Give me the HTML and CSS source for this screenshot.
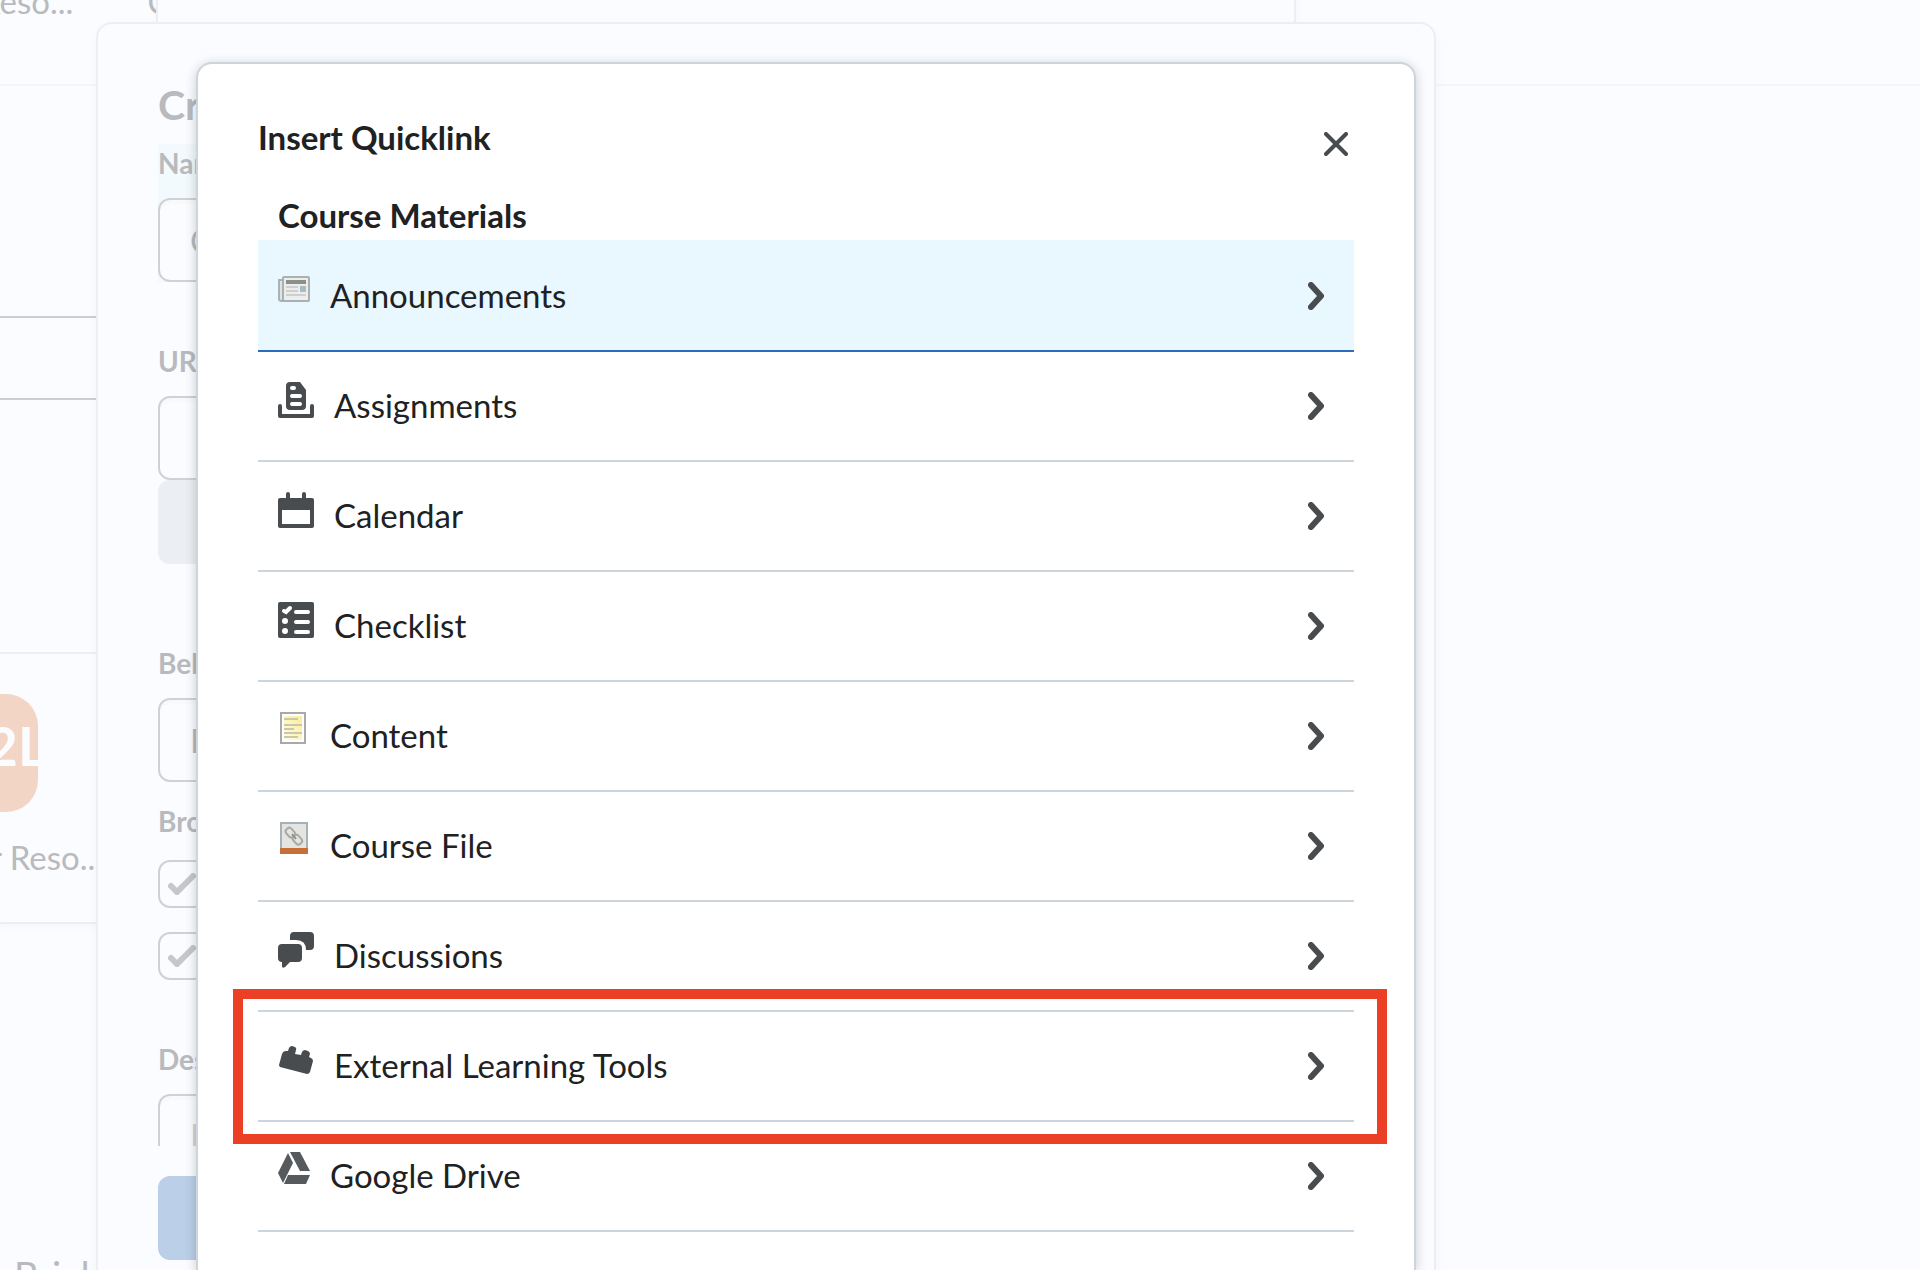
FILE: index.html
```html
<!DOCTYPE html>
<html lang="en">
<head>
<meta charset="utf-8">
<title>Insert Quicklink</title>
<meta name="viewport" content="width=device-width, initial-scale=1">
<link rel="stylesheet" href="styles.css">
</head>
<body>
<svg class="sprite" aria-hidden="true">
  <symbol id="chevron" viewBox="0 0 16 28"><path d="M3 3l10 11L3 25" fill="none" stroke="#494c4e" stroke-width="6" stroke-linecap="round" stroke-linejoin="round"/></symbol>
  <symbol id="check" viewBox="0 0 28 22"><path d="M3 13l6 6L25 3" fill="none" stroke="#c5c7ca" stroke-width="6" stroke-linecap="round"/></symbol>
</svg>

<div class="page" inert>
  <div class="topbar"><span class="tile-name cut">Reso...</span><span>C</span></div>
  <div class="block block-tall"></div>
  <div class="block block-row"></div>
  <div class="block block-space"></div>
  <div class="block block-tile">
    <div class="logo"><span>D2L</span></div>
    <span class="tile-name">r Reso...</span>
  </div>
  <div class="footer-title">Brightspace</div>
  <div class="panel"></div>
</div>

<div class="dialog form-dialog" inert>
  <h1>Create</h1>
  <div class="field active"><label for="name">Name</label><input id="name" class="box" type="text" value="C"></div>
  <div class="field url"><label for="url">URL</label><input id="url" class="box" type="text"></div>
  <button class="btn grey" type="button" aria-label="Insert Quicklink"></button>
  <div class="field behavior"><label for="behavior">Behavior</label><input id="behavior" class="box" type="text" value="I"></div>
  <fieldset>
    <legend>Browser</legend>
    <label class="tick"><input type="checkbox" aria-label="First option" checked><svg><use href="#check"/></svg></label>
    <label class="tick"><input type="checkbox" aria-label="Second option" checked><svg><use href="#check"/></svg></label>
  </fieldset>
  <div class="field"><label for="desc">Description</label><textarea id="desc" class="box">I</textarea></div>
  <button class="btn blue" type="button" aria-label="Save"></button>
</div>

<main class="dialog quicklink" role="dialog" aria-labelledby="ql-title">
  <header>
    <h2 id="ql-title">Insert Quicklink</h2>
    <button class="close" type="button" aria-label="Close"><svg viewBox="0 0 24 24"><path d="M2 2l20 20M22 2L2 22" stroke="#494c4e" stroke-width="4" stroke-linecap="round"/></svg></button>
  </header>
  <h3>Course Materials</h3>
  <ul>
    <li><a class="row selected" href="#announcements">
      <svg class="icon small" viewBox="0 0 32 32"><path d="M5 8H1v19q0 2 3 2h4" fill="#dfe3e4" stroke="#a9b1b4" stroke-width="2"/><rect x="5" y="5" width="26" height="24" rx="1" fill="#eceeee" stroke="#a9b1b4" stroke-width="2"/><path d="M8 10h20" stroke="#8f8f89" stroke-width="4"/><path d="M8 15h12M8 19h12M8 23h20" stroke="#cfd0cd" stroke-width="2"/><path d="M22 14h6v6h-6z" fill="#a9bcc4"/></svg>
      <span>Announcements</span><svg class="chevron"><use href="#chevron"/></svg></a></li>
    <li><a class="row" href="#assignments">
      <svg class="icon" viewBox="0 0 36 36"><path fill-rule="evenodd" d="M12 0h10l6 8v16q0 4-4 4H12q-4 0-4-4V4q0-4 4-4zM14 4a2 2 0 0 0 0 4h2a2 2 0 0 0 0-4zM14 12a2 2 0 0 0 0 4h8a2 2 0 0 0 0-4zM14 20a2 2 0 0 0 0 4h8a2 2 0 0 0 0-4z"/><path d="M0 24a2 2 0 0 1 4 0v8h28v-8a2 2 0 0 1 4 0v10q0 2-2 2H2q-2 0-2-2z"/></svg>
      <span>Assignments</span><svg class="chevron"><use href="#chevron"/></svg></a></li>
    <li><a class="row" href="#calendar">
      <svg class="icon" viewBox="0 0 36 36"><path fill-rule="evenodd" d="M2 6h6V2a2 2 0 0 1 4 0v4h12V2a2 2 0 0 1 4 0v4h6q2 0 2 2v26q0 2-2 2H2q-2 0-2-2V8q0-2 2-2zM4 18v14h28V18z"/></svg>
      <span>Calendar</span><svg class="chevron"><use href="#chevron"/></svg></a></li>
    <li><a class="row" href="#checklist">
      <svg class="icon" viewBox="0 0 36 36"><rect width="36" height="36" rx="2"/><g stroke="#fff" stroke-width="4" stroke-linecap="round" fill="none"><path d="M18 10h12M18 20h12M18 30h12"/><path d="M6 9l2 1 4-4"/></g><circle cx="7" cy="19" r="3" fill="#fff"/><circle cx="7" cy="29" r="3" fill="#fff"/></svg>
      <span>Checklist</span><svg class="chevron"><use href="#chevron"/></svg></a></li>
    <li><a class="row" href="#content">
      <svg class="icon small" viewBox="0 0 32 32"><defs><linearGradient id="paper" x1="1" y1="0" x2="0" y2="1"><stop offset="0" stop-color="#fdeb96"/><stop offset="1" stop-color="#ffffe4"/></linearGradient></defs><rect x="3" y="1" width="24" height="30" fill="#fff" stroke="#a9a9a9" stroke-width="2"/><path d="M6 4h18v24H6z" fill="url(#paper)"/><path d="M6 7h14M6 13h18M6 17h10M6 21h18M6 25h14" stroke="#c9c8ac" stroke-width="2"/></svg>
      <span>Content</span><svg class="chevron"><use href="#chevron"/></svg></a></li>
    <li><a class="row" href="#course-file">
      <svg class="icon small" viewBox="0 0 32 32"><rect x="3" y="1" width="26" height="28" fill="#e4e5e2" stroke="#a8b2b6" stroke-width="2"/><path d="M2 26h28v6H2z" fill="#c76f38"/><g fill="none" stroke="#a9a9a6" stroke-width="2"><rect x="9" y="6" width="7" height="10" rx="3" transform="rotate(-42 12 11)"/><rect x="16" y="13" width="7" height="10" rx="3" transform="rotate(-42 19 18)"/></g><path d="M14 12l4 5" stroke="#8e8e8b" stroke-width="2"/></svg>
      <span>Course File</span><svg class="chevron"><use href="#chevron"/></svg></a></li>
    <li><a class="row" href="#discussions">
      <svg class="icon" viewBox="0 0 36 36"><path d="M16 0h16q4 0 4 4v10q0 4-4 4h-4q0-10-10-10h-6V4q0-4 4-4z"/><path d="M4 12h16q4 0 4 4v10q0 4-4 4h-8l-5 5q-3 2-3-1v-4q-4 0-4-4V16q0-4 4-4z"/></svg>
      <span>Discussions</span><svg class="chevron"><use href="#chevron"/></svg></a></li>
    <li class="marked"><a class="row" href="#external-learning-tools">
      <svg class="icon" viewBox="0 0 36 36"><path d="M1 23L4 12q1-3 4-3h2l1-3q1-2 3-2l3 1q2 1 1 3l-1 4 6 1 1-3q1-2 3-2l3 1q2 1 2 3l-1 3 2 1q2 1 2 3l-3 11q-1 2-3 2L2 25q-1-1-1-2z"/></svg>
      <span>External Learning Tools</span><svg class="chevron"><use href="#chevron"/></svg></a></li>
    <li><a class="row" href="#google-drive">
      <svg class="icon small" viewBox="0 0 32 32"><g fill="#565a5c"><path d="M10 1L0 21l5 10 10-20z"/><path d="M12 0h10l10 19H22z"/><path d="M10 23h22l-4 9H6z"/></g></svg>
      <span>Google Drive</span><svg class="chevron"><use href="#chevron"/></svg></a></li>
  </ul>
</main>
</body>
</html>
```
FILE: styles.css
```css
* { box-sizing: border-box; }

body {
  margin: 0;
  height: 100vh;
  position: relative;
  overflow: hidden;
  background: #fbfcff;
  color: #202122;
  font: 33px/38px Lato, "Liberation Sans", sans-serif;
}

h1, h2, h3, ul, fieldset { margin: 0; padding: 0; border: 0; }
ul { list-style: none; }
.sprite { display: none; }

/* Faded page under the dialogs */
.page { color: #b8babd; }
.topbar {
  display: flex;
  gap: 74px;
  height: 86px;
  border-bottom: 2px solid #f4f5f8;
}
.topbar span { margin-top: -18px; }
.topbar .cut { margin-left: -20px; }
.block { width: 60%; border-bottom: 2px solid #eceef2; }
.block-tall { height: 232px; border-color: #cbcdd0; }
.block-row { height: 82px; border-color: #cbcdd0; }
.block-space { height: 254px; }
.block-tile {
  height: 270px;
  padding-top: 40px;
  box-shadow: 0 4px 4px #f8f9fb;
}
.block-tile .tile-name { display: block; margin: 26px 0 0 -10px; }
.logo {
  width: 118px;
  height: 118px;
  margin-left: -80px;
  border-radius: 32px;
  background: #f2d5c4;
  color: #fbfcff;
  font-size: 54px;
  font-weight: 700;
  line-height: 104px;
  overflow: hidden;
  display: flex;
  justify-content: flex-end;
}
.logo span { margin-right: -8px; }
.footer-title { margin: 332px 0 0 14px; font-size: 38px; }
.panel {
  position: absolute;
  top: -10px;
  left: 156px;
  right: 624px;
  height: 80px;
  border: 2px solid #eceef2;
  background: #fbfcff;
  box-shadow: 0 0 8px rgba(0, 0, 0, .03);
}

/* Dialogs */
.dialog {
  position: absolute;
  border: 2px solid #cdd5dc;
  border-bottom: 0;
  border-radius: 16px 16px 0 0;
}
.form-dialog {
  top: 22px;
  bottom: 0;
  left: 96px;
  right: 484px;
  padding: 56px 60px 0;
  border-color: #eceef2;
  background: #fbfcff;
  color: #b8babd;
  box-shadow: 0 4px 10px rgba(0, 0, 0, .04);
}
.form-dialog h1 { margin-bottom: 14px; font-size: 41px; line-height: 50px; }
.field { display: flex; flex-direction: column; gap: 16px; }
.field label, legend { font-size: 28px; font-weight: 700; line-height: 38px; }
.active { background: #f3fafe; }
.url { margin-top: 60px; }
.behavior { margin-top: 80px; }
.box {
  width: 100%;
  height: 84px;
  padding: 0 30px;
  border: 2px solid #cfd1d5;
  border-radius: 12px;
  background: #fbfcff;
  box-shadow: inset 0 4px 0 #f8f9fb;
  color: #b8babd;
  font: inherit;
}
textarea.box {
  height: 52px;
  padding-top: 20px;
  border-bottom: 0;
  border-radius: 12px 12px 0 0;
  resize: none;
  overflow: hidden;
  color: #d3d5d8;
}
fieldset { display: flex; flex-direction: column; gap: 24px; margin: 20px 0 60px; }
legend { padding: 0; margin-bottom: 20px; }
.tick { display: grid; width: 48px; height: 48px; }
.tick > * { grid-area: 1 / 1; }
.tick input {
  appearance: none;
  width: 48px;
  height: 48px;
  margin: 0;
  border: 2px solid #cfd1d5;
  border-radius: 12px;
}
.tick svg { width: 28px; height: 22px; place-self: center; }
.btn { display: block; width: 320px; height: 84px; border: 0; border-radius: 12px; }
.grey { background: #ebeef2; }
.blue { margin-top: 30px; background: #bbcfe9; }

.quicklink {
  top: 62px;
  bottom: 0;
  left: 196px;
  right: 504px;
  padding: 54px 60px 0;
  background: #fff;
  box-shadow: 0 2px 12px rgba(0, 0, 0, .2);
}
.quicklink header { display: flex; justify-content: space-between; padding-right: 6px; }
h2, h3 { font-size: 33px; line-height: 38px; }
h3 { margin: 40px 20px 6px; }
.close { width: 24px; height: 24px; margin-top: 14px; padding: 0; border: 0; background: none; }
.close svg { display: block; }

.row {
  display: flex;
  align-items: center;
  gap: 20px;
  padding: 34px 30px 36px 20px;
  border-bottom: 2px solid #cdd5dc;
  color: inherit;
  text-decoration: none;
}
.selected { padding-top: 36px; border-color: #2b6cbc; background: #e9f7fe; }
.icon { align-self: flex-start; width: 36px; height: 36px; margin-top: -4px; fill: #494c4e; }
.small { width: 32px; height: 32px; }
.chevron { width: 16px; height: 28px; margin: 2px 0 0 auto; }

/* Red annotation frame over the marked row */
.marked { position: relative; }
.marked::after {
  content: "";
  position: absolute;
  inset: -23px -33px -22px -25px;
  border: 10px solid #eb4026;
  pointer-events: none;
}
```
